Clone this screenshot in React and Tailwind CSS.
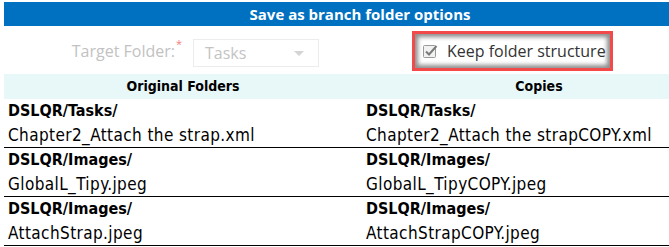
const rows = [
  {
    dir: "DSLQR/Tasks/",
    file: "Chapter2_Attach the strap.xml",
    copy: "Chapter2_Attach the strapCOPY.xml",
  },
  {
    dir: "DSLQR/Images/",
    file: "GlobalL_Tipy.jpeg",
    copy: "GlobalL_TipyCOPY.jpeg",
  },
  {
    dir: "DSLQR/Images/",
    file: "AttachStrap.jpeg",
    copy: "AttachStrapCOPY.jpeg",
  },
];

const tableFont = "font-['DejaVu_Sans_Condensed','DejaVu_Sans',sans-serif]";

export default function App() {
  return (
    <div className="w-[669px] h-[247px] overflow-hidden bg-white pl-1 pt-[2px]">
      <div className="w-[712px]">
        {/* title bar */}
        <div className="h-6 bg-[#0070c0] flex items-center justify-center text-white font-bold text-[15px] font-['Open_Sans',sans-serif]">
          Save as branch folder options
        </div>

        {/* options */}
        <div className="h-12 flex items-start font-['Open_Sans',sans-serif]">
          <div className="w-[178px] mt-[13px] flex justify-end text-[16px] text-[#c2c2c2]">
            Target Folder:
            <span className="text-[#f08080] text-[11px] -mt-[3px] ml-[1px]">*</span>
          </div>
          <div className="ml-[11px] mt-[13px] w-[126px] h-[28px] border border-[#ececec] flex items-center justify-between pl-[11px] pr-[14px] text-[16px] text-[#c4c4c4]">
            Tasks
            <span className="w-0 h-0 border-l-[5px] border-r-[5px] border-t-[5px] border-l-transparent border-r-transparent border-t-[#d4d4d4]" />
          </div>
          <div className="ml-[93px] mt-[5px] w-[201px] h-[40px] border-[3px] border-[#f24a4a]">
            <div className="h-full bg-white shadow-[inset_0_0_4px_3px_rgba(0,0,0,0.45)] flex items-center pl-[8px] gap-[9px] text-[16px] text-[#333]">
              <svg width="15" height="15" viewBox="0 0 15 15">
                <rect x="0.5" y="1.5" width="12" height="12" rx="1" fill="#f2f2f2" stroke="#9a9a9a" />
                <path d="M3 7.5 L6 10.5 L13.5 2" fill="none" stroke="#7a7a7a" strokeWidth="2" />
              </svg>
              Keep folder structure
            </div>
          </div>
        </div>

        {/* table */}
        <div className={`${tableFont} text-black`}>
          <div className="h-[25px] bg-[#e8f7f8] grid grid-cols-[358px_354px] items-center font-bold text-[14px]">
            <div className="text-center">Original Folders</div>
            <div className="text-center">Copies</div>
          </div>
          {rows.map((r, i) => (
            <div key={i} className="grid grid-cols-[358px_354px] border-b border-black leading-[24px]">
              <div className="pl-1">
                <div className="font-bold text-[16px]">{r.dir}</div>
                <div className="text-[17px] tracking-[0.4px]">{r.file}</div>
              </div>
              <div className="pl-1">
                <div className="font-bold text-[16px]">{r.dir}</div>
                <div className="text-[17px] tracking-[0.4px]">{r.copy}</div>
              </div>
            </div>
          ))}
        </div>
      </div>
    </div>
  );
}
